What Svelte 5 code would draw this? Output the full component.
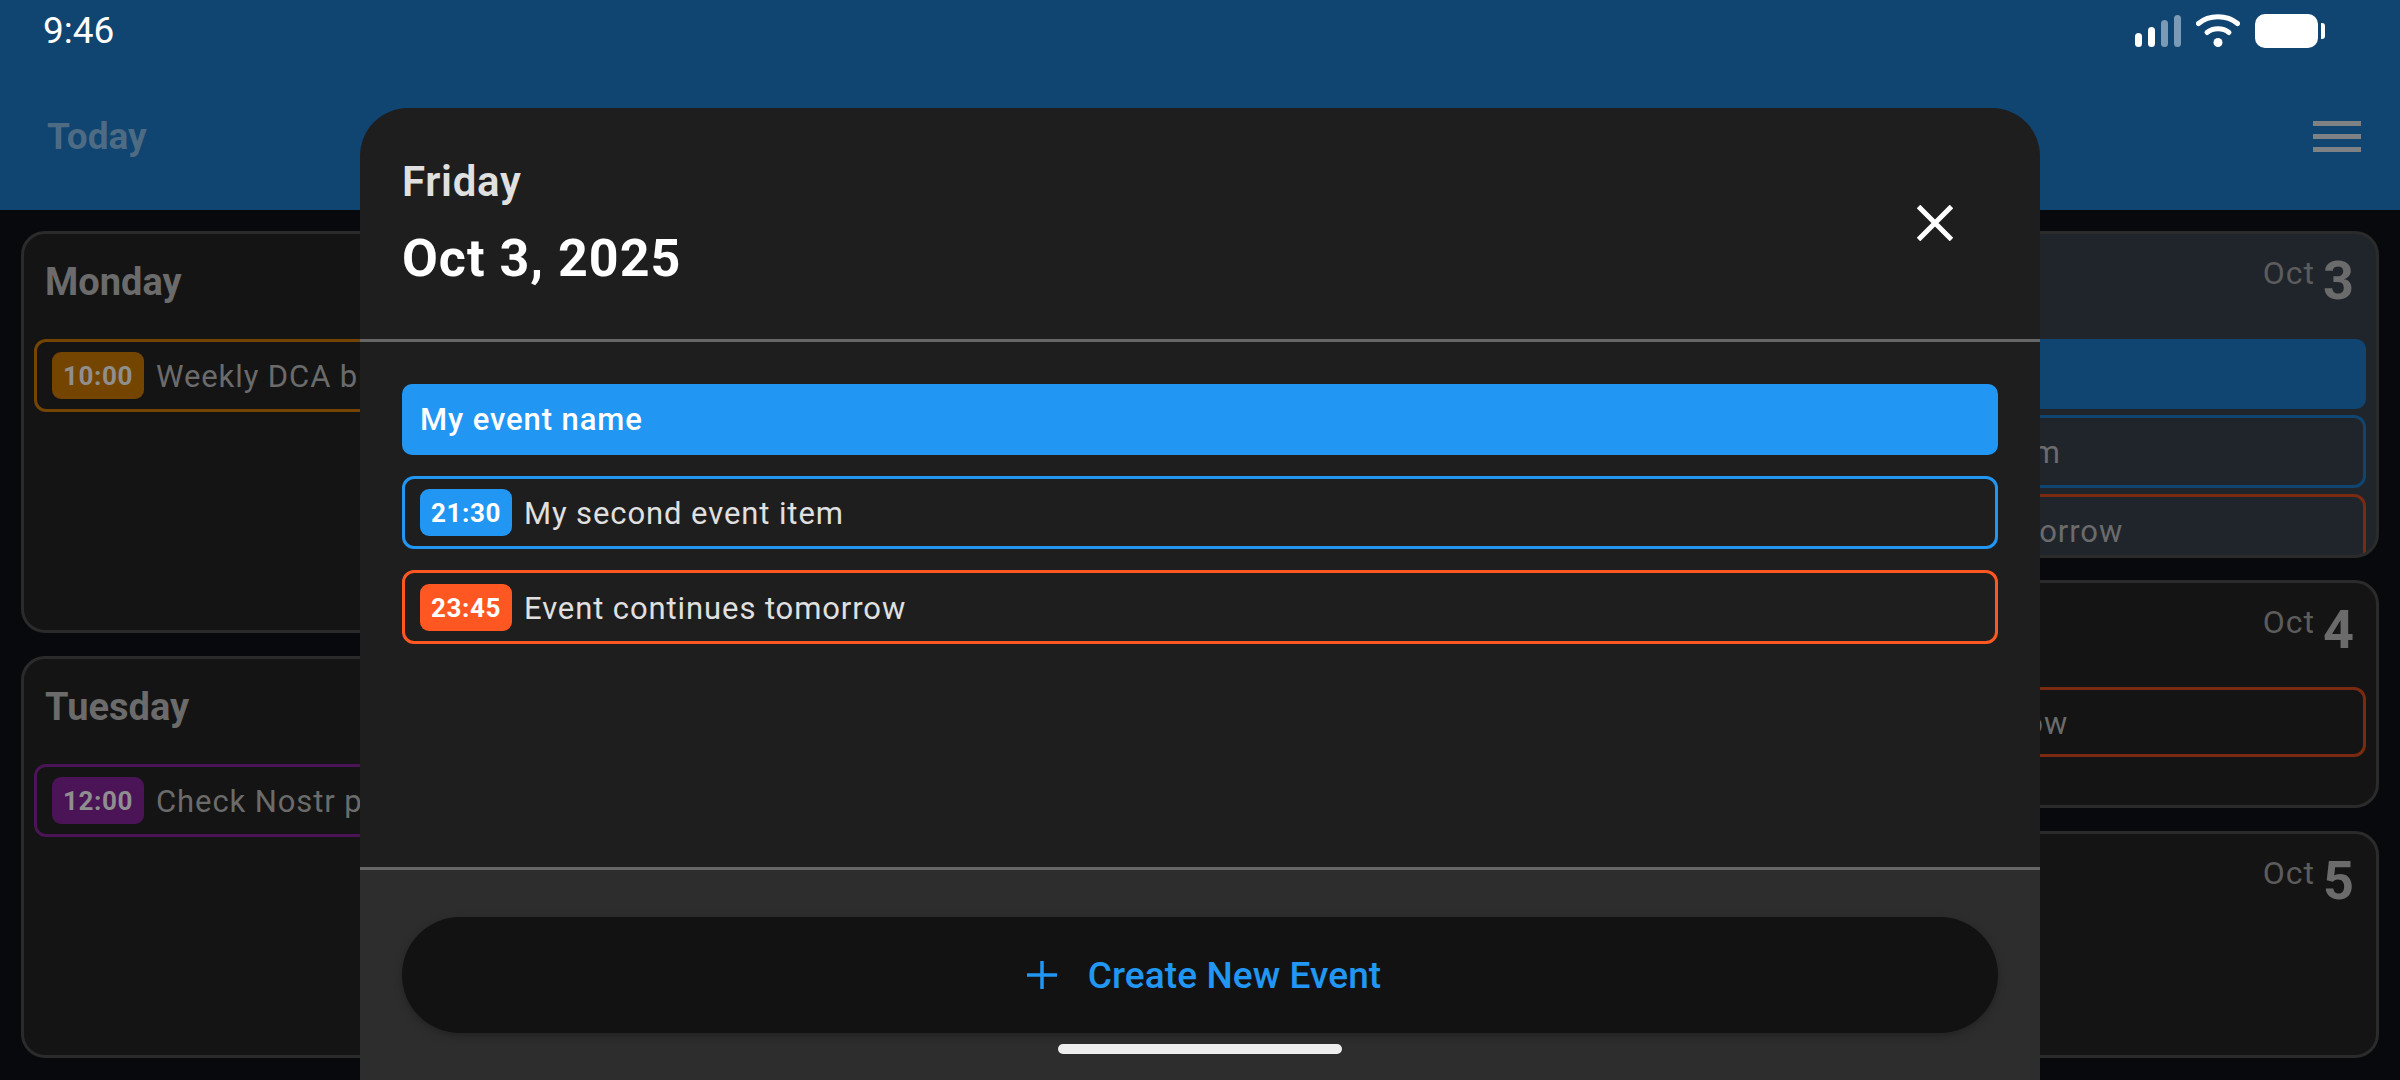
<script>
  const modalEvents = [
    { time: "21:30", title: "My second event item", color: "blue" },
    { time: "23:45", title: "Event continues tomorrow", color: "orange" }
  ];
</script>

<div class="page">
  <header class="appbar">
    <div class="status">
      <span class="clock">9:46</span>
      <div class="status-icons">
        <div class="signal">
          <i style="height:14px"></i>
          <i style="height:20px"></i>
          <i class="off" style="height:27px"></i>
          <i class="off" style="height:32px"></i>
        </div>
        <svg class="wifi" width="44" height="34" viewBox="0 0 44 34" fill="none" stroke="#fff" stroke-linecap="round">
          <path d="M2.5 9.5C13 0.5 31 0.5 41.5 9.5" stroke-width="5" />
          <path d="M11 18.5C17 13.5 27 13.5 33 18.5" stroke-width="5" />
          <circle cx="22" cy="28.5" r="4.5" fill="#fff" stroke="none" />
        </svg>
        <div class="battery"><b></b><em></em></div>
      </div>
    </div>
    <div class="toolbar">
      <span class="today">Today</span>
      <div class="menu"><i></i><i></i><i></i></div>
    </div>
  </header>

  <main class="week">
    <div class="col">
      <section class="day grow">
        <div class="day-head"><h3>Monday</h3></div>
        <div class="item amber"><span class="chip">10:00</span><span class="label">Weekly DCA buy</span></div>
      </section>
      <section class="day grow">
        <div class="day-head"><h3>Tuesday</h3></div>
        <div class="item purple"><span class="chip">12:00</span><span class="label">Check Nostr posts</span></div>
      </section>
    </div>

    <div class="col">
      <section class="day current fri">
        <div class="day-head end"><span class="mon">Oct</span><span class="num">3</span></div>
        <div class="stack">
          <div class="bar">My event name</div>
          <div class="item blue"><span class="chip">21:30</span><span class="label">My second event item</span></div>
          <div class="item orange"><span class="chip">23:45</span><span class="label">Event continues tomorrow</span></div>
        </div>
      </section>
      <section class="day sat">
        <div class="day-head end"><span class="mon">Oct</span><span class="num">4</span></div>
        <div class="item orange cont"><span class="label">Event continues tomorrow</span></div>
      </section>
      <section class="day sun">
        <div class="day-head end"><span class="mon">Oct</span><span class="num">5</span></div>
      </section>
    </div>
  </main>

  <div class="modal">
    <div class="modal-head">
      <div>
        <div class="weekday">Friday</div>
        <div class="date">Oct 3, 2025</div>
      </div>
      <svg class="close" width="36" height="36" viewBox="0 0 36 36" stroke="#fff" stroke-width="5">
        <path d="M1.5 1.5L34.5 34.5M34.5 1.5L1.5 34.5" />
      </svg>
    </div>
    <div class="modal-body">
      <div class="m-bar">My event name</div>
      {#each modalEvents as ev}
        <div class="m-item {ev.color}">
          <span class="chip">{ev.time}</span>
          <span class="label">{ev.title}</span>
        </div>
      {/each}
    </div>
    <div class="modal-foot">
      <button class="create">
        <svg width="30" height="28" viewBox="0 0 30 28" stroke="#2196f3" stroke-width="3.5">
          <path d="M15 0V28M0 14H30" />
        </svg>
        <span>Create New Event</span>
      </button>
    </div>
  </div>

  <div class="home"></div>
</div>

<style>
  :global(body) {
    margin: 0;
    background: #08090c;
  }

  .page {
    position: relative;
    width: 2400px;
    height: 1080px;
    overflow: hidden;
    background: #08090c;
    font-family: Roboto, "Noto Sans", sans-serif;
  }

  .appbar {
    height: 210px;
    background: #104471;
    box-sizing: border-box;
    padding: 0 39px 0 43px;
  }

  .status {
    height: 62px;
    display: flex;
    justify-content: space-between;
    align-items: flex-start;
  }

  .clock {
    color: #fff;
    font-size: 37px;
    line-height: 61px;
  }

  .status-icons {
    display: flex;
    align-items: flex-end;
    height: 48px;
    margin-right: 36px;
  }

  .signal {
    display: flex;
    align-items: flex-end;
    gap: 5.5px;
    margin-bottom: 1px;
  }

  .signal i {
    display: block;
    width: 7.5px;
    border-radius: 4px;
    background: #fff;
  }

  .signal i.off {
    background: #7a9ab5;
  }

  .wifi {
    margin-left: 15px;
  }

  .battery {
    display: flex;
    align-items: center;
    gap: 3px;
    margin-left: 15px;
  }

  .battery b {
    display: block;
    width: 63px;
    height: 34px;
    border-radius: 10px;
    background: #fff;
  }

  .battery em {
    display: block;
    width: 4px;
    height: 16px;
    border-radius: 0 3px 3px 0;
    background: #fff;
  }

  .toolbar {
    display: flex;
    justify-content: space-between;
    align-items: center;
    height: 148px;
  }

  .today {
    font-size: 37px;
    font-weight: 700;
    color: #4e6b84;
    margin-left: 4px;
  }

  .menu {
    display: flex;
    flex-direction: column;
    gap: 8px;
    width: 48px;
  }

  .menu i {
    display: block;
    height: 5px;
    background: #7f8284;
  }

  .week {
    height: 870px;
    box-sizing: border-box;
    padding: 21px 21px 22px;
    display: flex;
    justify-content: space-between;
  }

  .col {
    width: 773px;
    display: flex;
    flex-direction: column;
    gap: 23px;
  }

  .day {
    box-sizing: border-box;
    overflow: hidden;
    background: #141414;
    border: 3px solid #2b2b2b;
    border-radius: 24px;
    padding: 0 10px;
    color: #6b6b6b;
  }

  .grow {
    flex: 1;
  }

  .current {
    background: #20252c;
  }

  .fri {
    height: 327px;
    margin-bottom: -1px;
  }

  .sat {
    height: 228px;
  }

  .sun {
    flex: 1;
  }

  .day-head {
    height: 105px;
    box-sizing: border-box;
    padding: 13px 11px 0;
    display: flex;
    align-items: flex-start;
  }

  .day-head.end {
    justify-content: flex-end;
    gap: 8px;
    padding-right: 12px;
    padding-top: 16px;
  }

  h3 {
    margin: 0;
    font-size: 38px;
    line-height: 70px;
    font-weight: 700;
    color: #6b6b6b;
  }

  .mon {
    font-size: 32px;
    line-height: 46px;
    letter-spacing: 1px;
    color: #5c5c5c;
  }

  .num {
    font-size: 54px;
    line-height: 62px;
    font-weight: 700;
    color: #6b6b6b;
  }

  .stack {
    display: flex;
    flex-direction: column;
    gap: 6px;
  }

  .bar {
    height: 70px;
    border-radius: 10px;
    background: #104471;
    color: #70879b;
    font-size: 31px;
    font-weight: 500;
    line-height: 70px;
    padding-left: 18px;
    flex: none;
  }

  .item {
    display: flex;
    align-items: center;
    gap: 12px;
    height: 73px;
    flex: none;
    box-sizing: border-box;
    border: 3px solid;
    border-radius: 12px;
    padding-left: 15px;
    font-size: 31px;
    letter-spacing: 0.9px;
    white-space: nowrap;
    color: #6b6b6b;
  }

  .label {
    padding-top: 2px;
  }

  .item .chip,
  .m-item .chip {
    display: block;
    width: 92px;
    height: 47px;
    flex: none;
    border-radius: 9px;
    text-align: center;
    font-size: 26px;
    font-weight: 700;
    line-height: 49px;
    letter-spacing: 0.6px;
  }

  .item.amber { border-color: #744500; }
  .item.amber .chip { background: #744500; color: #8f8f8f; }
  .item.purple { border-color: #4a1456; }
  .item.purple .chip { background: #4a1456; color: #8f8f8f; }
  .item.blue { border-color: #104471; }
  .item.blue .chip { background: #104471; color: #8f8f8f; }
  .item.orange { border-color: #7a2a10; }
  .item.orange .chip { background: #7a2a10; color: #8f8f8f; }
  .item.cont { padding-left: 64px; height: 70px; margin-top: -1px; }

  .modal {
    position: absolute;
    left: 360px;
    top: 108px;
    bottom: 0;
    width: 1680px;
    display: flex;
    flex-direction: column;
    overflow: hidden;
    background: #1e1e1e;
    border-radius: 48px 48px 0 0;
  }

  .modal-head {
    height: 234px;
    flex: none;
    box-sizing: border-box;
    border-bottom: 3px solid #666;
    padding: 46px 87px 0 42px;
    display: flex;
    justify-content: space-between;
    align-items: flex-start;
  }

  .weekday {
    font-size: 42px;
    font-weight: 600;
    line-height: 56px;
    letter-spacing: 0.7px;
    color: #e0e0e0;
  }

  .date {
    font-size: 52px;
    font-weight: 700;
    line-height: 60px;
    margin-top: 19px;
    letter-spacing: 1px;
    color: #fff;
  }

  .close {
    margin-top: 51px;
  }

  .modal-body {
    flex: 1;
    padding: 42px 42px 0;
    display: flex;
    flex-direction: column;
    gap: 21px;
  }

  .m-bar {
    height: 71px;
    border-radius: 10px;
    background: #2196f3;
    color: #fff;
    font-size: 31px;
    font-weight: 500;
    line-height: 72px;
    padding-left: 18px;
    letter-spacing: 0.9px;
  }

  .m-item {
    display: flex;
    align-items: center;
    gap: 12px;
    height: 73px;
    box-sizing: border-box;
    border: 3px solid;
    border-radius: 12px;
    padding-left: 15px;
    font-size: 31px;
    letter-spacing: 0.9px;
    color: #e0e0e0;
  }

  .m-item.blue { border-color: #2196f3; }
  .m-item.blue .chip { background: #2196f3; color: #fff; }
  .m-item.orange { border-color: #ff5722; height: 74px; }
  .m-item.orange .chip { background: #ff5722; color: #fff; }

  .modal-foot {
    height: 213px;
    flex: none;
    box-sizing: border-box;
    border-top: 3px solid #666;
    background: #2d2d2d;
    padding: 47px 42px 0;
  }

  .create {
    width: 100%;
    height: 116px;
    box-sizing: border-box;
    padding-left: 14px;
    display: flex;
    align-items: center;
    justify-content: center;
    gap: 31px;
    border: none;
    border-radius: 58px;
    background: #121212;
    box-shadow: 0 3px 8px rgba(0, 0, 0, 0.25);
    color: #2196f3;
    font-family: inherit;
    font-size: 37px;
    font-weight: 500;
    letter-spacing: 0.1px;
  }

  .home {
    position: absolute;
    left: 1058px;
    top: 1044px;
    width: 284px;
    height: 10px;
    border-radius: 5px;
    background: #eee;
  }
</style>
